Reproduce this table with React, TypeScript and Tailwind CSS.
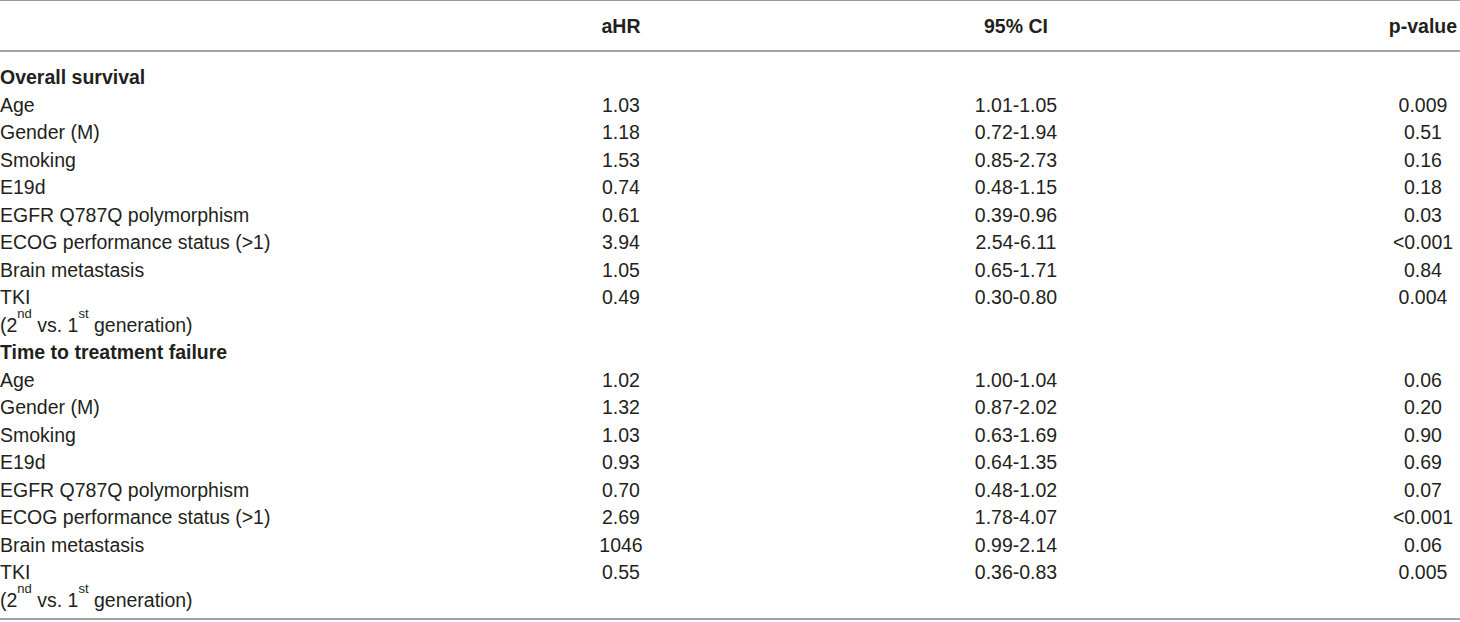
import React from "react";

type Row = {
  label: React.ReactNode;
  hr?: string;
  ci?: string;
  p?: string;
  section?: boolean;
};

const TkiSub = () => (
  <>
    (2<sup className="text-[13px] leading-none align-[7px]">nd</sup> vs. 1
    <sup className="text-[13px] leading-none align-[7px]">st</sup> generation)
  </>
);

const rows: Row[] = [
  { label: "Overall survival", section: true },
  { label: "Age", hr: "1.03", ci: "1.01-1.05", p: "0.009" },
  { label: "Gender (M)", hr: "1.18", ci: "0.72-1.94", p: "0.51" },
  { label: "Smoking", hr: "1.53", ci: "0.85-2.73", p: "0.16" },
  { label: "E19d", hr: "0.74", ci: "0.48-1.15", p: "0.18" },
  { label: "EGFR Q787Q polymorphism", hr: "0.61", ci: "0.39-0.96", p: "0.03" },
  { label: "ECOG performance status (>1)", hr: "3.94", ci: "2.54-6.11", p: "<0.001" },
  { label: "Brain metastasis", hr: "1.05", ci: "0.65-1.71", p: "0.84" },
  { label: "TKI", hr: "0.49", ci: "0.30-0.80", p: "0.004" },
  { label: <TkiSub /> },
  { label: "Time to treatment failure", section: true },
  { label: "Age", hr: "1.02", ci: "1.00-1.04", p: "0.06" },
  { label: "Gender (M)", hr: "1.32", ci: "0.87-2.02", p: "0.20" },
  { label: "Smoking", hr: "1.03", ci: "0.63-1.69", p: "0.90" },
  { label: "E19d", hr: "0.93", ci: "0.64-1.35", p: "0.69" },
  { label: "EGFR Q787Q polymorphism", hr: "0.70", ci: "0.48-1.02", p: "0.07" },
  { label: "ECOG performance status (>1)", hr: "2.69", ci: "1.78-4.07", p: "<0.001" },
  { label: "Brain metastasis", hr: "1046", ci: "0.99-2.14", p: "0.06" },
  { label: "TKI", hr: "0.55", ci: "0.36-0.83", p: "0.005" },
  { label: <TkiSub /> },
];

const cols = "grid grid-cols-[596px_50px_740px_74px]";

export default function App() {
  return (
    <div className="w-[1460px] h-[622px] bg-white text-[#231f20] text-[19.5px] leading-[27.5px] font-['Liberation_Sans',Arial,sans-serif]">
      <div className="border-t border-b-2 border-t-[#9a9a9a] border-b-[#a3a3a3] pt-[12px] pb-[9.5px]">
        <div className={`${cols} font-bold`}>
          <div />
          <div className="text-center whitespace-nowrap">aHR</div>
          <div className="text-center">95% CI</div>
          <div className="text-center whitespace-nowrap">p-value</div>
        </div>
      </div>
      <div className="border-b-2 border-[#a3a3a3] pt-[12px] pb-[4px]">
        {rows.map((r, i) => (
          <div key={i} className={cols}>
            <div className={r.section ? "font-bold whitespace-nowrap" : "whitespace-nowrap"}>
              {r.label}
            </div>
            <div className="text-center whitespace-nowrap">{r.hr}</div>
            <div className="text-center whitespace-nowrap">{r.ci}</div>
            <div className="text-center whitespace-nowrap">{r.p}</div>
          </div>
        ))}
      </div>
    </div>
  );
}
